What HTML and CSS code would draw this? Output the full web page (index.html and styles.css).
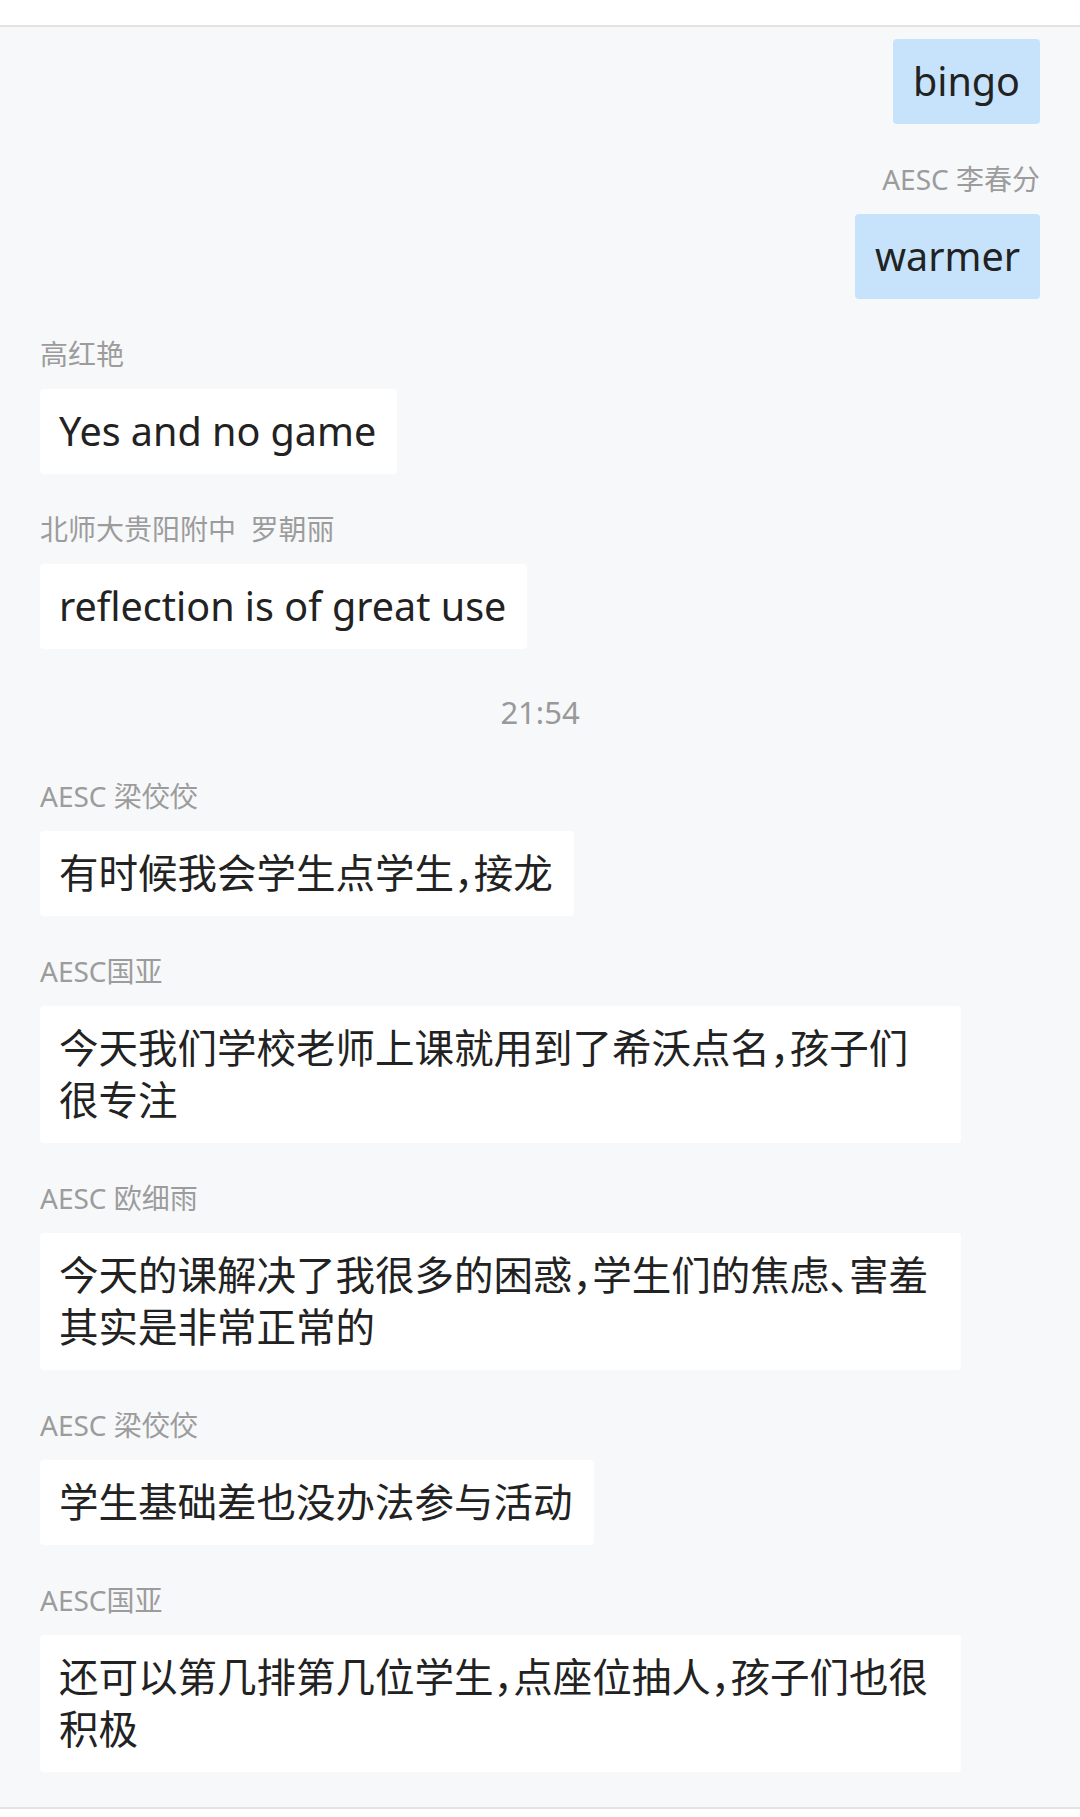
FILE: index.html
```html
<!DOCTYPE html>
<html lang="zh-CN">
<head>
  <meta charset="UTF-8">
  <title>讨论区</title>
  <link rel="stylesheet" href="styles.css">
</head>
<body>

  <div class="topbar"></div>

  <div class="chat">

    <div class="msg mine first">
      <div class="bubble">bingo</div>
    </div>

    <div class="msg mine">
      <div class="name">AESC 李春分</div>
      <div class="bubble">warmer</div>
    </div>

    <div class="msg">
      <div class="name">高红艳</div>
      <div class="bubble">Yes and no game</div>
    </div>

    <div class="msg">
      <div class="name">北师大贵阳附中&nbsp; 罗朝丽</div>
      <div class="bubble">reflection is of great use</div>
    </div>

    <div class="time">21:54</div>

    <div class="msg">
      <div class="name">AESC 梁佼佼</div>
      <div class="bubble">有时候我会学生点学生，接龙</div>
    </div>

    <div class="msg">
      <div class="name">AESC国亚</div>
      <div class="bubble">今天我们学校老师上课就用到了希沃点名，孩子们很专注</div>
    </div>

    <div class="msg">
      <div class="name">AESC 欧细雨</div>
      <div class="bubble">今天的课解决了我很多的困惑，学生们的焦虑、害羞其实是非常正常的</div>
    </div>

    <div class="msg">
      <div class="name">AESC 梁佼佼</div>
      <div class="bubble">学生基础差也没办法参与活动</div>
    </div>

    <div class="msg">
      <div class="name">AESC国亚</div>
      <div class="bubble">还可以第几排第几位学生，点座位抽人，孩子们也很积极</div>
    </div>

  </div>

  <div class="bottombar"></div>

</body>
</html>
```

FILE: styles.css
```css
html, body {
  margin: 0;
  height: 100%;
}

body {
  font-family: "Noto Sans", "Noto Sans CJK SC", sans-serif;
  background: #fff;
  display: flex;
  flex-direction: column;
  height: 1817px;
  overflow: hidden;
}

.topbar {
  height: 25px;
  background: #fff;
  border-bottom: 2px solid #e3e3e3;
  flex: none;
}

.chat {
  flex: 1;
  background: #f7f8fa;
  padding: 12px 40px 0;
  overflow: hidden;
  display: flex;
  flex-direction: column;
}

.msg {
  display: flex;
  flex-direction: column;
  align-items: flex-start;
  margin-top: 40px;
}

.msg.first {
  margin-top: 0;
}

.msg.mine {
  align-items: flex-end;
}

.name {
  font-size: 28px;
  line-height: 30px;
  color: #9c9c9c;
  margin-bottom: 20px;
  white-space: nowrap;
}

.bubble {
  box-sizing: border-box;
  max-width: 921px;
  padding: 16px 21px 17px 19px;
  background: #fff;
  border-radius: 4px;
  color: #222;
  font-size: 39.5px;
  line-height: 52px;
  font-feature-settings: "halt";
}

.mine .bubble {
  background: #c7e3fb;
  padding-left: 20px;
  padding-right: 20px;
}

.time {
  margin: 43px 0 9px;
  text-align: center;
  font-size: 31px;
  line-height: 40px;
  color: #999;
}

.bottombar {
  height: 8px;
  flex: none;
  background: #fff;
  border-top: 2px solid #e3e3e3;
}
```
